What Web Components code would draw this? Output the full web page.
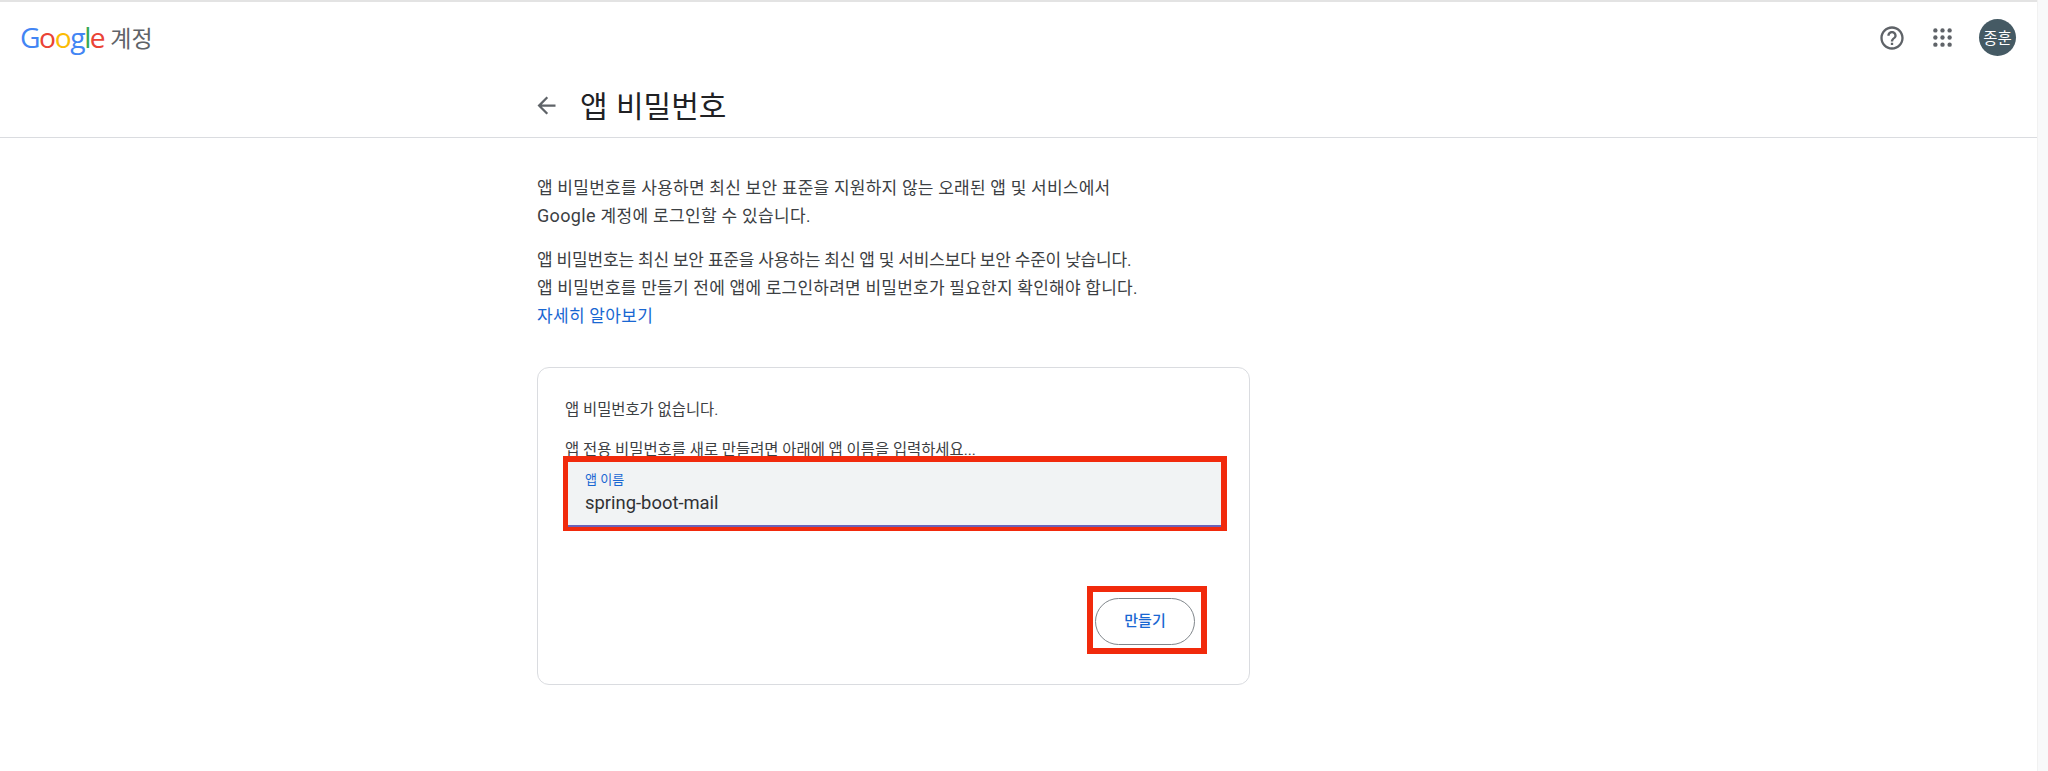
<!DOCTYPE html>
<html lang="ko"><head><meta charset="utf-8">
<style>
html,body{margin:0;padding:0;background:#fff;height:771px;overflow:hidden}
body{font-family:Roboto,"Noto Sans CJK KR",sans-serif;color:#3c4043}
</style></head><body>
<app-shell>
  <account-header slot="header"></account-header>
  <page-title slot="title">앱 비밀번호</page-title>
  <intro-text></intro-text>
  <password-card></password-card>
</app-shell>
<script>
const FONT='Roboto,"Noto Sans CJK KR",sans-serif';
function def(name,html){
  customElements.define(name,class extends HTMLElement{
    constructor(){super();this.attachShadow({mode:'open'}).innerHTML=html;}
  });
}
def('app-shell',`<style>
:host{display:flex;width:2048px;height:771px;overflow:hidden;font-family:${FONT}}
.main{width:2037px;flex:none;display:flex;flex-direction:column;border-top:2px solid #e3e3e3;box-sizing:border-box}
.bar{flex:1;background:#f8f9fa;border-left:1px solid #f1f1f1}
.content{display:flex;flex-direction:column;padding-left:537px}
</style>
<div class="main"><slot name="header"></slot><slot name="title"></slot><div class="content"><slot></slot></div></div>
<div class="bar"></div>`);
def('account-header',`<style>
:host{display:flex;align-items:center;height:71px;padding-left:20px;padding-right:21px;box-sizing:border-box}
.logo{font:500 28.2px/1 "Open Sans",Roboto,sans-serif;letter-spacing:-1.4px;display:flex;margin-bottom:1px}
.b{color:#4285f4}.r{color:#ea4335}.y{color:#fbbc05}.g{color:#34a853}
.acc{font:400 23px/1 "Noto Sans CJK KR",sans-serif;color:#5f6368;margin-left:6px;margin-bottom:1px}
.sp{flex:1}
svg{display:block}
.help{margin-right:27px}
.apps{margin-right:27px}
.av{width:37px;height:37px;border-radius:50%;background:#455a64;color:#fff;font:400 15.5px/37px "Noto Sans CJK KR",sans-serif;text-align:center}
</style>
<span class="logo"><span class="b">G</span><span class="r">o</span><span class="y">o</span><span class="b">g</span><span class="g">l</span><span class="r">e</span></span>
<span class="acc">계정</span><span class="sp"></span>
<svg class="help" width="28" height="28" viewBox="0 0 24 24" fill="#5f6368"><path d="M11 18h2v-2h-2v2zm1-16C6.48 2 2 6.48 2 12s4.48 10 10 10 10-4.48 10-10S17.52 2 12 2zm0 18c-4.41 0-8-3.59-8-8s3.59-8 8-8 8 3.59 8 8-3.59 8-8 8zm0-14c-2.21 0-4 1.79-4 4h2c0-1.1.9-2 2-2s2 .9 2 2c0 2-3 1.75-3 5h2c0-2.25 3-2.5 3-5 0-2.21-1.79-4-4-4z"/></svg>
<svg class="apps" width="19" height="19" viewBox="0 0 20 20" fill="#5f6368"><circle cx="2.5" cy="2.5" r="2.3"/><circle cx="10" cy="2.5" r="2.3"/><circle cx="17.5" cy="2.5" r="2.3"/><circle cx="2.5" cy="10" r="2.3"/><circle cx="10" cy="10" r="2.3"/><circle cx="17.5" cy="10" r="2.3"/><circle cx="2.5" cy="17.5" r="2.3"/><circle cx="10" cy="17.5" r="2.3"/><circle cx="17.5" cy="17.5" r="2.3"/></svg>
<div class="av">종훈</div>`);
def('page-title',`<style>
:host{display:flex;align-items:center;height:65px;box-sizing:border-box;padding-left:533px;border-bottom:1px solid #dadce0;font:400 30px/40px "Noto Sans CJK KR",sans-serif;color:#202124}
svg{display:block;margin-right:20px}
h1{font:inherit;margin:0 0 3px}
</style>
<svg width="27" height="27" viewBox="0 0 24 24" fill="#5f6368"><path d="M20 11H7.83l5.59-5.59L12 4l-8 8 8 8 1.41-1.41L7.83 13H20v-2z"/></svg>
<h1><slot></slot></h1>`);
def('intro-text',`<style>
:host{display:block;width:680px;font:400 17px/28px ${FONT};color:#3c4043;padding-top:36px}
p{margin:0 0 16px}
.g{font-size:18px}
a{color:#1967d2;text-decoration:none;letter-spacing:.3px}
.a{letter-spacing:.25px}.b{letter-spacing:-.17px}.c{letter-spacing:.24px}.d{letter-spacing:.35px}
</style>
<p><span class="a">앱 비밀번호를 사용하면 최신 보안 표준을 지원하지 않는 오래된 앱 및 서비스에서</span><br><span class="d"><span class="g">Google</span> 계정에 로그인할 수 있습니다.</span></p>
<p><span class="b">앱 비밀번호는 최신 보안 표준을 사용하는 최신 앱 및 서비스보다 보안 수준이 낮습니다.</span><br><span class="c">앱 비밀번호를 만들기 전에 앱에 로그인하려면 비밀번호가 필요한지 확인해야 합니다.</span><br><a href="#">자세히 알아보기</a></p>`);
def('password-card',`<style>
:host{display:block;position:relative;width:713px;height:318px;box-sizing:border-box;border:1px solid #dadce0;border-radius:12px;margin-top:21px;padding:32px 27px 0;font:400 15.4px/20px ${FONT};color:#3c4043}
p{margin:0}
.l2{margin-top:20px}
.field{position:relative;z-index:1;width:653px;height:64.5px;margin:2px 0 0 3px;background:#f1f3f4;border-bottom:2px solid #6a62b8;box-sizing:border-box;padding:10px 17px 0}
.lab{font-size:13px;line-height:16px;color:#1967d2}
.val{font-size:18.4px;line-height:24px;color:#303134;margin-top:3px}
.acts{display:flex;justify-content:flex-end;padding-right:27px;margin-top:71.5px}
.btn{width:100px;height:47px;box-sizing:border-box;border:1px solid #80868b;border-radius:24px;background:#fff;color:#1967d2;font:500 15px/45px ${FONT};text-align:center}
.mark{position:absolute;border:6px solid #f12a0c;box-sizing:border-box;pointer-events:none}
.m1{left:25px;top:88px;width:664px;height:75px;border-top-width:6px}
.m2{left:549px;top:218px;width:120px;height:68px}
</style>
<p>앱 비밀번호가 없습니다.</p>
<p class="l2">앱 전용 비밀번호를 새로 만들려면 아래에 앱 이름을 입력하세요...</p>
<div class="field"><div class="lab">앱 이름</div><div class="val">spring-boot-mail</div></div>
<div class="acts"><div class="btn">만들기</div></div>
<div class="mark m1"></div><div class="mark m2"></div>`);
</script>
</body></html>
